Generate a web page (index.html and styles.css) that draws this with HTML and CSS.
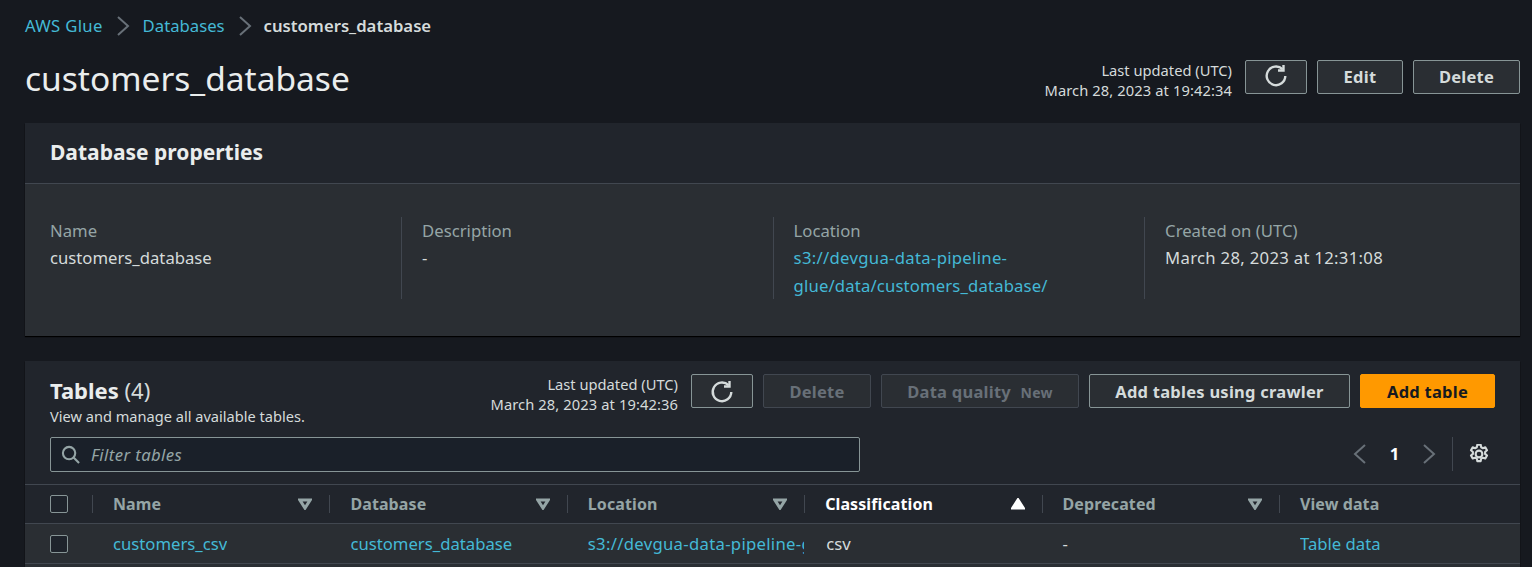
FILE: index.html
```html
<!DOCTYPE html>
<html lang="en">

<head>
    <meta charset="UTF-8">
    <title>customers_database</title>
    <link rel="stylesheet" href="styles.css">
</head>

<body>
    <nav class="crumbs">
        <a class="crumb-root" href="#">AWS Glue</a>
        <svg class="crumb-sep" viewBox="0 0 16 20"><path d="M3 1l10 9-10 9"/></svg>
        <a href="#">Databases</a>
        <svg class="crumb-sep" viewBox="0 0 16 20"><path d="M3 1l10 9-10 9"/></svg>
        <span class="crumb-current">customers_database</span>
    </nav>

    <header class="page-head">
        <h1>customers_database</h1>
        <div class="actions">
            <div class="stamp">Last updated (UTC)<br><span class="stamp-date">March 28, 2023 at 19:42:34</span></div>
            <button class="btn btn-icon">
                <svg class="refresh" viewBox="0 0 24 24"><path d="M18.500 5.200A9.300 9.300 0 1 0 21.300 12"/><path d="M19.500 1v5.500H14"/></svg>
            </button>
            <button class="btn btn-edit">Edit</button>
            <button class="btn btn-del">Delete</button>
        </div>
    </header>

    <section class="card">
        <div class="card-head">
            <h2>Database properties</h2>
        </div>
        <div class="props">
            <div class="prop">
                <div class="label">Name</div>
                <div>customers_database</div>
            </div>
            <div class="prop">
                <div class="label">Description</div>
                <div>-</div>
            </div>
            <div class="prop">
                <div class="label">Location</div>
                <a href="#"><span class="s3">s3://devgua-data-pipeline-</span><br><span class="s3-tail">glue/data/customers_database/</span></a>
            </div>
            <div class="prop">
                <div class="label">Created on (UTC)</div>
                <div class="date">March 28, 2023 at 12:31:08</div>
            </div>
        </div>
    </section>

    <section class="card tables">
        <div class="tables-top">
            <div class="tables-title">
                <h2>Tables <span class="count">(4)</span></h2>
                <p>View and manage all available tables.</p>
            </div>
            <div class="actions">
                <div class="stamp">Last updated (UTC)<br><span class="stamp-date">March 28, 2023 at 19:42:36</span></div>
                <button class="btn btn-icon">
                    <svg class="refresh" viewBox="0 0 24 24"><path d="M18.500 5.200A9.300 9.300 0 1 0 21.300 12"/><path d="M19.500 1v5.500H14"/></svg>
                </button>
                <button class="btn btn-off btn-del2">Delete</button>
                <button class="btn btn-off btn-dq">Data quality <small>New</small></button>
                <button class="btn btn-crawler">Add tables using crawler</button>
                <button class="btn btn-primary">Add table</button>
            </div>
        </div>
        <div class="filter-row">
            <div class="filter">
                <svg class="search" viewBox="0 0 20 20"><circle cx="8.500" cy="8.500" r="6.500"/><path d="M13 13l6 6"/></svg>
                <span>Filter tables</span>
            </div>
            <div class="pager">
                <svg class="pager-arrow" viewBox="0 0 16 20"><path d="M13 1L3 10l10 9"/></svg>
                <b>1</b>
                <svg class="pager-arrow" viewBox="0 0 16 20"><path d="M3 1l10 9-10 9"/></svg>
                <i class="pager-line"></i>
                <svg class="gear" viewBox="0.500 0.500 19 19">
                    <circle cx="10" cy="10" r="3.200"/>
                    <path d="M8.400 1.200h3.200l.5 2.400 1.600.9 2.300-.8 1.600 2.800-1.800 1.600v1.800l1.800 1.600-1.600 2.800-2.300-.8-1.600.9-.5 2.400H8.400l-.5-2.400-1.600-.9-2.300.8-1.600-2.800 1.800-1.600V8.100L2.400 6.500 4 3.700l2.300.8 1.600-.9z"/>
                </svg>
            </div>
        </div>
        <div class="row row-head">
            <div class="cell cell-check"><i class="check"></i></div>
            <div class="cell">Name<svg class="sort" viewBox="0 0 12 10"><path d="M1.500 1.500h9L6 8.500z"/></svg></div>
            <div class="cell">Database<svg class="sort" viewBox="0 0 12 10"><path d="M1.500 1.500h9L6 8.500z"/></svg></div>
            <div class="cell">Location<svg class="sort" viewBox="0 0 12 10"><path d="M1.500 1.500h9L6 8.500z"/></svg></div>
            <div class="cell cell-sorted">Classification<svg class="sort" viewBox="0 0 12 10"><path d="M1.500 8.500h9L6 1.500z"/></svg></div>
            <div class="cell">Deprecated<svg class="sort" viewBox="0 0 12 10"><path d="M1.500 1.500h9L6 8.500z"/></svg></div>
            <div class="cell">View data</div>
        </div>
        <div class="row row-body">
            <div class="cell cell-check"><i class="check"></i></div>
            <div class="cell"><a href="#">customers_csv</a></div>
            <div class="cell"><a href="#">customers_database</a></div>
            <div class="cell"><a class="s3" href="#">s3://devgua-data-pipeline-glue/data/customers_csv/</a></div>
            <div class="cell cell-csv">csv</div>
            <div class="cell">-</div>
            <div class="cell"><a href="#">Table data</a></div>
        </div>
        <div class="row-rest"></div>
    </section>
</body>

</html>
```

FILE: styles.css
```css
* {
    box-sizing: border-box;
}

html,
body {
    height: 567px;
    overflow: hidden;
}

body {
    margin: 0;
    padding: 0 12px 0 25px;
    background: #16191f;
    color: #d5dbdb;
    font-family: "Noto Sans", "Open Sans", sans-serif;
    font-size: 16.700px;
    line-height: 28px;
}

a {
    color: #44b9d6;
    text-decoration: none;
}

h1,
h2,
p {
    margin: 0;
    font-weight: normal;
}

.date {
    letter-spacing: 0.300px;
}

.s3 {
    letter-spacing: 0.300px;
}

.s3-tail {
    letter-spacing: 0.150px;
}

.crumbs {
    display: flex;
    align-items: center;
    height: 52px;
}

.crumb-root {
    letter-spacing: 0.300px;
}

.crumb-sep {
    width: 16px;
    height: 20px;
    margin: 0 12px;
    fill: none;
    stroke: #687078;
    stroke-width: 2;
}

.crumb-current {
    margin-left: -1px;
    font-weight: 600;
}

.page-head {
    display: flex;
    justify-content: space-between;
    height: 71px;
}

.page-head h1 {
    font-size: 33.500px;
    line-height: 52px;
    color: #eaeded;
}

.actions {
    display: flex;
    align-items: flex-start;
    gap: 10px;
}

.page-head .actions {
    padding-top: 8px;
}

.stamp {
    margin-right: 3px;
    font-size: 14.700px;
    line-height: 20px;
    text-align: right;
}

.stamp-date {
    letter-spacing: 0.100px;
}

.btn {
    height: 34px;
    padding: 0;
    border: 1px solid #879596;
    border-radius: 2px;
    background: #2a2e33;
    color: #d5dbdb;
    font: 700 16.500px "Noto Sans", sans-serif;
    letter-spacing: 0.250px;
}

.page-head .btn {
    padding-bottom: 2px;
}

.tables .btn {
    padding-top: 1px;
}

.btn-icon {
    display: flex;
    align-items: center;
    justify-content: center;
    width: 62px;
}

.refresh {
    width: 24px;
    height: 24px;
    fill: none;
    stroke: #d5dbdb;
    stroke-width: 2.400;
}

.btn-edit {
    width: 86px;
}

.btn-del {
    width: 107px;
}

.card {
    background: #2a2e33;
    box-shadow: 0 1px 1px #000;
}

.card-head {
    height: 61px;
    padding: 0 25px;
    background: #21252c;
    border-bottom: 1px solid #414750;
}

.card-head h2 {
    font-size: 21px;
    font-weight: 700;
    line-height: 58px;
    color: #eaeded;
}

.props {
    display: grid;
    grid-template-columns: repeat(4, 371.500px);
    height: 152px;
    padding: 33px 0 0 4.600px;
}

.prop {
    height: 82px;
    padding-left: 20px;
    border-left: 1px solid #414750;
}

.prop:first-child {
    padding-left: 20.400px;
    border-left: 0;
}

.label {
    height: 27px;
    color: #95a5a6;
}

.tables {
    margin-top: 25px;
    background: #21252c;
}

.tables-top {
    display: flex;
    justify-content: space-between;
    height: 76px;
    padding: 13px 25px 0;
}

.tables-title h2 {
    font-size: 22px;
    font-weight: 700;
    line-height: 32px;
    color: #eaeded;
}

.count {
    font-weight: normal;
    color: #d5dbdb;
}

.tables-title p {
    font-size: 14.600px;
    line-height: 20px;
}

.btn-del2 {
    width: 108px;
}

.btn-dq {
    width: 198px;
}

.btn-dq small {
    margin-left: 5px;
    font-size: 14px;
}

.btn-off {
    border-color: #414750;
    color: #687078;
}

.btn-crawler {
    width: 261px;
}

.tables .btn-primary {
    width: 135px;
    border-color: #ff9900;
    background: #ff9900;
    color: #16191f;
}

.filter-row {
    display: flex;
    justify-content: space-between;
    height: 48px;
    padding: 0 25px;
    border-bottom: 1px solid #414750;
}

.filter {
    display: flex;
    align-items: center;
    gap: 11px;
    width: 810px;
    height: 35px;
    padding-left: 10px;
    border: 1px solid #879596;
    border-radius: 2px;
    background: #1a2029;
    color: #95a5a6;
    font-style: italic;
    letter-spacing: 0.400px;
}

.search {
    width: 19px;
    height: 19px;
    fill: none;
    stroke: #95a5a6;
    stroke-width: 2.200;
}

.pager {
    display: flex;
    align-items: center;
    height: 34px;
    padding-right: 6px;
}

.pager b {
    width: 53px;
    text-align: center;
    color: #fff;
}

.pager-arrow {
    width: 16px;
    height: 20px;
    fill: none;
    stroke: #687078;
    stroke-width: 2;
}

.pager-line {
    width: 1px;
    height: 34px;
    margin: 0 16px 0 15px;
    background: #414750;
}

.gear {
    width: 20px;
    height: 20px;
    fill: none;
    stroke: #d5dbdb;
    stroke-width: 2;
    stroke-linejoin: round;
}

.row {
    display: grid;
    grid-template-columns: 67px repeat(5, 237.400px) 1fr;
    align-items: center;
    border-bottom: 1px solid #414750;
}

.row-head {
    height: 39px;
    color: #95a5a6;
    font-size: 16px;
    font-weight: 700;
    letter-spacing: 0.100px;
}

.row-body {
    height: 40px;
    background: #2a2e33;
}

.row-rest {
    height: 10px;
    background: #2a2e33;
}

.cell {
    display: flex;
    align-items: center;
    justify-content: space-between;
    height: 24px;
    padding: 0 17px 0 20px;
    line-height: 24px;
    white-space: nowrap;
}

.row-head .cell {
    height: 18px;
    border-left: 1px solid #414750;
}

.row-body .cell {
    height: 28px;
    padding: 0 0 0 21px;
    overflow: hidden;
    line-height: 28px;
}

.row-body .cell-csv {
    padding-left: 22px;
}

.row .cell-check {
    height: 18px;
    padding: 0 0 0 25px;
    border: 0;
}

.row-head .cell-sorted {
    color: #fff;
}

.cell-sorted .sort {
    fill: #fff;
    stroke: #fff;
}

.sort {
    flex: none;
    width: 14px;
    height: 12px;
    fill: none;
    stroke: #95a5a6;
    stroke-width: 2.600;
}

.row-body .cell a {
    overflow: hidden;
}

.check {
    width: 18px;
    height: 18px;
    border: 1px solid #879596;
    border-radius: 2px;
    background: #1e232b;
}
```
